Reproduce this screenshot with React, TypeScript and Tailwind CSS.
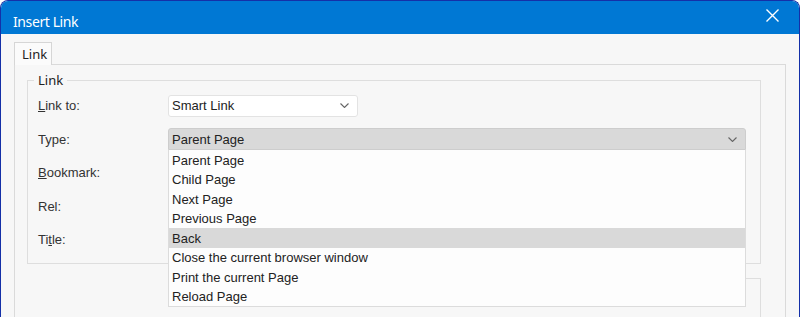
const LIST_ITEMS = [
  "Parent Page",
  "Child Page",
  "Next Page",
  "Previous Page",
  "Back",
  "Close the current browser window",
  "Print the current Page",
  "Reload Page",
];

const Chevron = () => (
  <svg width="9" height="5" viewBox="0 0 9 5">
    <path d="M0.5 0.5 L4.5 4.5 L8.5 0.5" fill="none" stroke="#666" strokeWidth="1.1" />
  </svg>
);

const Row = ({ label, children }: { label: React.ReactNode; children?: React.ReactNode }) => (
  <div className="flex h-[33.5px] items-center">
    <div className="w-[130px] text-[13px] text-[#333]">{label}</div>
    {children}
  </div>
);

export default function App() {
  return (
    <div className="h-[317px] w-[800px] overflow-hidden bg-white font-['Liberation_Sans',Arial,sans-serif]">
      <div className="flex h-[340px] flex-col overflow-hidden rounded-t-[8px] border-x border-t border-[#1430a8] bg-[#f7f7f7]">
        {/* title bar */}
        <div className="flex h-[33px] shrink-0 items-center justify-between bg-[#0078d4] pl-[12px] pr-[20px]">
          <span className="pt-[7px] font-['Noto_Sans',sans-serif] text-[14px] tracking-[-0.4px] text-white">
            Insert Link
          </span>
          <svg width="13" height="13" viewBox="0 0 13 13" className="-mt-[5px]">
            <path d="M0.5 0.5 L12.5 12.5 M12.5 0.5 L0.5 12.5" stroke="white" strokeWidth="1.4" />
          </svg>
        </div>

        <div className="flex-1 pl-[13px] pr-[13px] pt-[8px]">
          {/* tabs */}
          <div className="flex">
            <div className="relative z-10 -mb-px h-[23px] w-[38px] border border-b-0 border-[#d6d6d6] bg-[#fbfbfb] pl-[7px] pt-[2px] font-['Noto_Sans',sans-serif] text-[13px] text-[#222]">
              Link
            </div>
          </div>

          {/* tab panel */}
          <div className="h-[300px] border border-[#dadada] pl-[12px] pr-[24px] pt-[15px]">
            <div className="relative border border-[#dedede] pb-[6px] pl-[10px] pr-[14px] pt-[8px]">
              <span className="absolute -top-[8px] left-[6px] bg-[#f7f7f7] px-[4px] font-['Noto_Sans',sans-serif] text-[13px] leading-[15px] text-[#222]">
                Link
              </span>

              <Row label={<><span className="underline">L</span>ink to:</>}>
                <div className="flex h-[22px] w-[190px] items-center justify-between rounded-[3px] border border-[#e3e3e3] bg-white pl-[3px] pr-[8px] text-[13px] text-[#222]">
                  <span>Smart Link</span>
                  <Chevron />
                </div>
              </Row>

              <Row label="Type:">
                <div className="relative flex-1">
                  <div className="flex h-[22px] items-center justify-between rounded-t-[3px] border border-[#cdcdcd] bg-[#d9d9d9] pl-[3px] pr-[8px] text-[13px] text-[#222]">
                    <span>Parent Page</span>
                    <Chevron />
                  </div>
                  <div className="absolute left-0 right-0 top-[22px] z-20 border border-t-0 border-[#dcdcdc] bg-[#fdfdfd]">
                    {LIST_ITEMS.map((item) => (
                      <div
                        key={item}
                        className={`flex h-[19.5px] items-center pl-[3px] pt-px text-[13px] text-[#222] ${
                          item === "Back" ? "bg-[#d9d9d9]" : ""
                        }`}
                      >
                        {item}
                      </div>
                    ))}
                  </div>
                </div>
              </Row>

              <Row label={<><span className="underline">B</span>ookmark:</>} />
              <Row label="Rel:" />
              <Row label={<>Ti<span className="underline">t</span>le:</>} />
            </div>

            <div className="ml-auto mt-[14px] h-[60px] w-[120px] border-r border-t border-[#dedede]" />
          </div>
        </div>
      </div>
    </div>
  );
}
